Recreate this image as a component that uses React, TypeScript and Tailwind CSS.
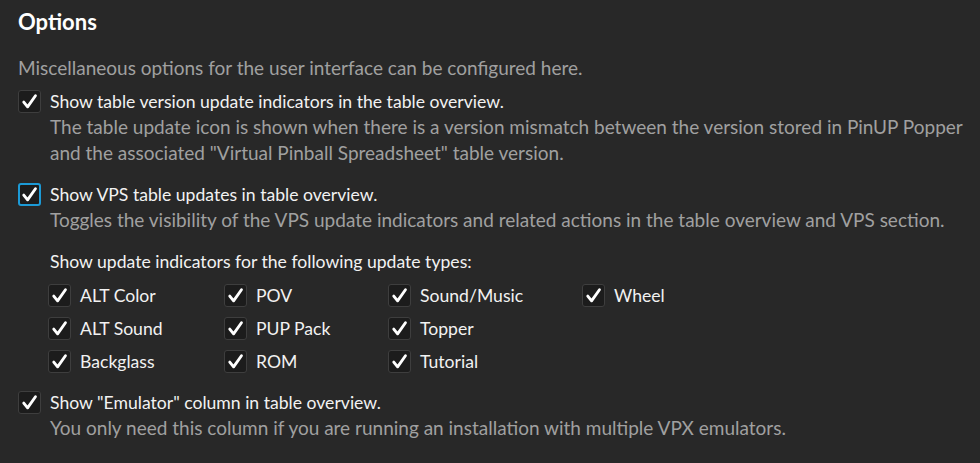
import React from 'react';

const CheckBox: React.FC<{ focused?: boolean }> = ({ focused }) => (
  <span
    className={`flex h-[23px] w-[23px] shrink-0 items-center justify-center rounded-[3px] bg-[#1c1c1c] ${
      focused ? 'border-2 border-[#1c9ad6]' : 'border border-[#3e3e3e]'
    }`}
  >
    <svg width="17" height="17" viewBox="0 0 16 16">
      <path d="M2.6 8.6 L6.2 13 L13.6 2.6" fill="none" stroke="#ffffff" strokeWidth="2.7" strokeLinecap="round" strokeLinejoin="round" />
    </svg>
  </span>
);

const Option: React.FC<{ label: string; desc: string[]; focused?: boolean }> = ({ label, desc, focused }) => (
  <div className="flex gap-[9px]">
    <CheckBox focused={focused} />
    <div className="flex flex-col">
      <span className="h-[23px] text-[17.6px] leading-[23px] text-[#f2f2f2]">{label}</span>
      <div className="mt-[1px] flex flex-col">
        {desc.map((d) => (
          <span key={d} className="leading-[26px] text-[#a0a0a0]">{d}</span>
        ))}
      </div>
    </div>
  </div>
);

const types = [
  ['ALT Color', 'POV', 'Sound/Music', 'Wheel'],
  ['ALT Sound', 'PUP Pack', 'Topper', ''],
  ['Backglass', 'ROM', 'Tutorial', ''],
];

export default function App() {
  return (
    <div className="h-[463px] w-[980px] overflow-hidden whitespace-nowrap bg-[#282828] px-[18px] pt-[8px] text-[19px] font-['Lato',sans-serif]">
      <h1 className="text-[22px] font-bold leading-[28px] text-white">Options</h1>
      <p className="mt-[20px] leading-[24px] text-[#a0a0a0]">
        Miscellaneous options for the user interface can be configured here.
      </p>
      <div className="mt-[10px]">
        <Option
          label="Show table version update indicators in the table overview."
          desc={[
            'The table update icon is shown when there is a version mismatch between the version stored in PinUP Popper',
            'and the associated "Virtual Pinball Spreadsheet" table version.',
          ]}
        />
      </div>
      <div className="mt-[17px]">
        <Option
          focused
          label="Show VPS table updates in table overview."
          desc={[
            'Toggles the visibility of the VPS update indicators and related actions in the table overview and VPS section.',
          ]}
        />
      </div>
      <div className="ml-[30px] mt-[17px] text-[17.6px]">
        <p className="pl-[2px] leading-[24px] text-[#f2f2f2]">Show update indicators for the following update types:</p>
        <div className="mt-[10px] grid grid-cols-[176px_164px_194px_120px] gap-y-[10px]">
          {types.flat().map((t, i) =>
            t ? (
              <div key={i} className="flex items-center gap-[9px]">
                <CheckBox />
                <span className="leading-[23px] text-[#f2f2f2]">{t}</span>
              </div>
            ) : (
              <div key={i} />
            )
          )}
        </div>
      </div>
      <div className="mt-[18px]">
        <Option
          label='Show "Emulator" column in table overview.'
          desc={['You only need this column if you are running an installation with multiple VPX emulators.']}
        />
      </div>
    </div>
  );
}
